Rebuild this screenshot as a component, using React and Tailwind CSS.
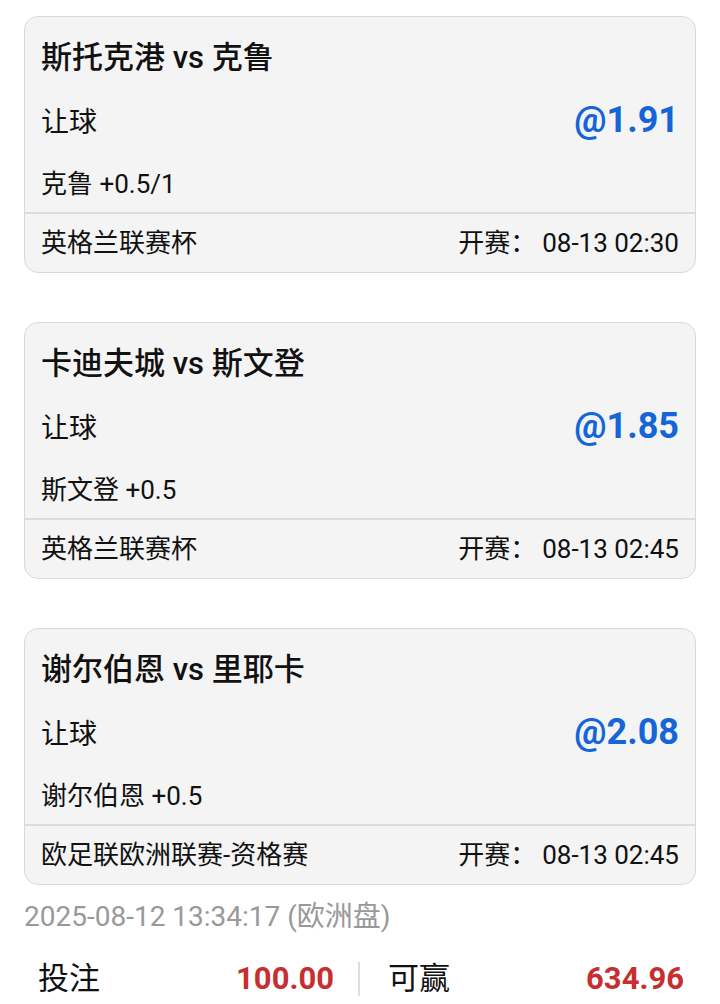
const FONT = { fontFamily: 'Roboto, "Noto Sans CJK SC", sans-serif' };

const bets = [
  { match: "斯托克港 vs 克鲁", market: "让球", odds: "@1.91", pick: "克鲁 +0.5/1", league: "英格兰联赛杯", start: "08-13 02:30" },
  { match: "卡迪夫城 vs 斯文登", market: "让球", odds: "@1.85", pick: "斯文登 +0.5", league: "英格兰联赛杯", start: "08-13 02:45" },
  { match: "谢尔伯恩 vs 里耶卡", market: "让球", odds: "@2.08", pick: "谢尔伯恩 +0.5", league: "欧足联欧洲联赛-资格赛", start: "08-13 02:45" },
];

function BetCard({ bet }) {
  return (
    <div className="rounded-[14px] border border-[#d9d9d9] bg-[#f4f4f4] text-[#111]">
      <div className="px-4 pt-[21px] pb-[12px]">
        <div className="h-[40px] leading-[40px] text-[31px] font-medium">{bet.match}</div>
        <div className="mt-[21px] flex h-[48px] items-center justify-between">
          <span className="text-[28px]">{bet.market}</span>
          <span className="mb-[6px] text-[36px] font-bold text-[#1565d8]">{bet.odds}</span>
        </div>
        <div className="mt-[21px] h-[32px] leading-[32px] text-[26px]">{bet.pick}</div>
      </div>
      <div className="flex h-[60px] items-center justify-between border-t-2 border-[#dcdcdc] px-4 text-[26px]">
        <span>{bet.league}</span>
        <span>开赛：<span className="ml-[6px]">{bet.start}</span></span>
      </div>
    </div>
  );
}

export default function App() {
  return (
    <div className="h-[1004px] w-[720px] overflow-hidden bg-white px-6 pt-4" style={FONT}>
      <div className="flex flex-col gap-[49px]">
        {bets.map((bet, i) => (
          <BetCard key={i} bet={bet} />
        ))}
      </div>
      <div className="mt-[14px] text-[28px] leading-[36px] text-[#999]">2025-08-12 13:34:17 (欧洲盘)</div>
      <div className="mt-[24px] flex items-center text-[31px] leading-[40px]">
        <div className="flex w-[318px] items-center justify-between pl-[14px] pr-[8px]">
          <span className="text-[#111]">投注</span>
          <span className="font-bold text-[#c62f2f]">100.00</span>
        </div>
        <div className="mx-[16px] h-[34px] w-[2px] bg-[#dedede]" />
        <div className="flex flex-1 items-center justify-between pl-[12px] pr-[12px]">
          <span className="text-[#111]">可赢</span>
          <span className="font-bold text-[#c62f2f]">634.96</span>
        </div>
      </div>
    </div>
  );
}
